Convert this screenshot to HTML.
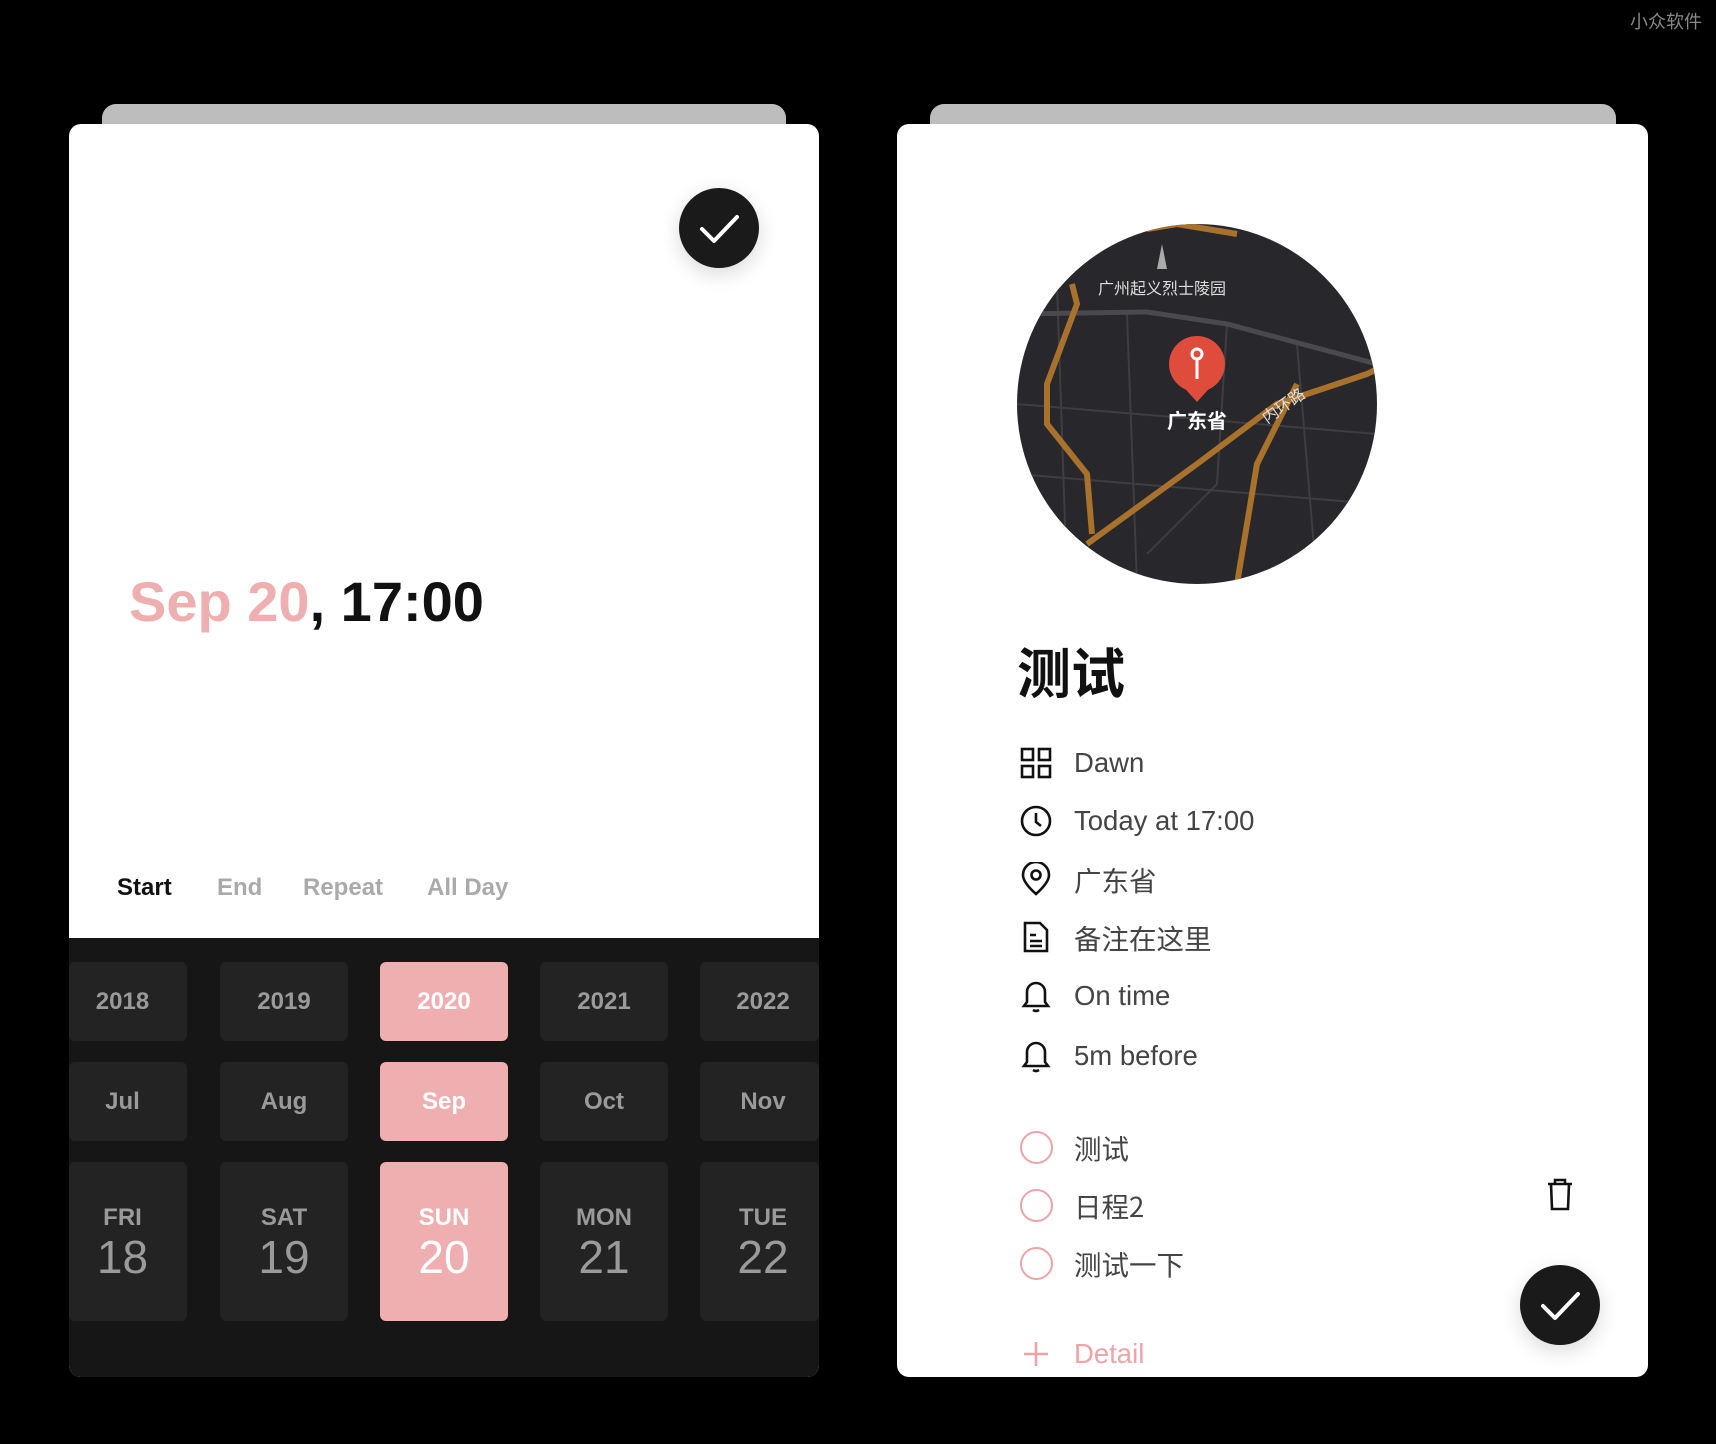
<!DOCTYPE html>
<html><head><meta charset="utf-8"><style>
*{margin:0;padding:0;box-sizing:border-box}
body{width:1716px;height:1444px;background:#000;position:relative;overflow:hidden;font-family:"Liberation Sans","Noto Sans CJK SC",sans-serif}
.a{position:absolute}
.tab{background:#bdbdbd;border-radius:14px 14px 0 0;height:40px}
.card{background:#fff;border-radius:12px}
.cell{position:absolute;background:#232323;border-radius:6px;color:#9a9a9a;font-weight:bold;font-size:24px;display:flex;align-items:center;justify-content:center;flex-direction:column}
.pk{background:#efafb1;color:#fff}
.big{font-size:46px;font-weight:normal;line-height:46px;margin-top:2px}
.it{position:absolute;left:1074px;font-size:27.5px;color:#444;line-height:34px}
.ic{position:absolute;left:1019px;width:34px;height:34px}
.ck{position:absolute;left:1020px;width:33px;height:33px;border:2.5px solid #eea3a6;border-radius:50%}
.l{padding-right:11px}.r{padding-left:7px}
</style></head><body>
<div class="a" style="right:14px;top:8px;color:#888;font-size:18px">小众软件</div>

<div class="a tab" style="left:102px;top:104px;width:684px"></div>
<div class="a card" style="left:69px;top:124px;width:750px;height:1253px;overflow:hidden">
 <div class="a" style="left:0;top:814px;width:750px;height:439px;background:#161616"></div>
</div>
<div class="a" style="left:679px;top:188px;width:80px;height:80px;border-radius:50%;background:#1a1a1a;box-shadow:0 6px 20px rgba(0,0,0,.15)">
 <svg width="80" height="80"><path d="M23 41 L35 53 L58 29" stroke="#fff" stroke-width="4" fill="none" stroke-linecap="round" stroke-linejoin="round"/></svg></div>
<div class="a" style="left:129px;top:569px;font-size:56px;font-weight:bold;color:#111;white-space:nowrap"><span style="color:#efafb1">Sep 20</span>, 17:00</div>
<div class="a" style="left:117px;top:874px;font-size:24px;font-weight:bold;color:#111">Start</div>
<div class="a" style="left:217px;top:874px;font-size:24px;font-weight:bold;color:#aaa">End</div>
<div class="a" style="left:303px;top:874px;font-size:24px;font-weight:bold;color:#aaa">Repeat</div>
<div class="a" style="left:427px;top:874px;font-size:24px;font-weight:bold;color:#aaa">All Day</div>

<div class="cell l" style="left:69px;top:962px;width:118px;height:79px">2018</div>
<div class="cell" style="left:220px;top:962px;width:128px;height:79px">2019</div>
<div class="cell pk" style="left:380px;top:962px;width:128px;height:79px">2020</div>
<div class="cell" style="left:540px;top:962px;width:128px;height:79px">2021</div>
<div class="cell r" style="left:700px;top:962px;width:119px;height:79px">2022</div>
<div class="cell l" style="left:69px;top:1062px;width:118px;height:79px">Jul</div>
<div class="cell" style="left:220px;top:1062px;width:128px;height:79px">Aug</div>
<div class="cell pk" style="left:380px;top:1062px;width:128px;height:79px">Sep</div>
<div class="cell" style="left:540px;top:1062px;width:128px;height:79px">Oct</div>
<div class="cell r" style="left:700px;top:1062px;width:119px;height:79px">Nov</div>
<div class="cell l" style="left:69px;top:1162px;width:118px;height:159px">FRI<div class="big">18</div></div>
<div class="cell" style="left:220px;top:1162px;width:128px;height:159px">SAT<div class="big">19</div></div>
<div class="cell pk" style="left:380px;top:1162px;width:128px;height:159px">SUN<div class="big">20</div></div>
<div class="cell" style="left:540px;top:1162px;width:128px;height:159px">MON<div class="big">21</div></div>
<div class="cell r" style="left:700px;top:1162px;width:119px;height:159px">TUE<div class="big">22</div></div>

<div class="a tab" style="left:930px;top:104px;width:686px"></div>
<div class="a card" style="left:897px;top:124px;width:751px;height:1253px"></div>

<svg class="a" style="left:1017px;top:224px" width="360" height="360" viewBox="0 0 360 360">
<defs><clipPath id="c"><circle cx="180" cy="180" r="180"/></clipPath></defs>
<g clip-path="url(#c)">
<rect width="360" height="360" fill="#28272b"/>
<g stroke="#3e3d42" stroke-width="2" fill="none">
<path d="M0 90 L130 88 L210 100 L360 140"/><path d="M0 180 L360 210"/><path d="M0 250 L360 280"/><path d="M110 90 L120 360"/><path d="M210 100 L200 260 L130 330"/><path d="M280 120 L300 360"/><path d="M40 60 L50 360"/>
</g>
<path d="M0 90 L130 88 L210 100 L360 140" stroke="#4a494e" stroke-width="5" fill="none"/>
<g stroke="#a8712c" stroke-width="6" fill="none">
<path d="M55 60 L60 80 L30 160 L30 200 L70 250 L75 310"/>
<path d="M70 320 L180 240 L260 180 L350 150 L370 140"/>
<path d="M280 160 L240 240 L220 360"/>
<path d="M130 5 L160 0 L220 10"/>
</g>
<text x="145" y="70" fill="#ddd" font-size="16" text-anchor="middle" font-family="Noto Sans CJK SC,sans-serif">广州起义烈士陵园</text>
<path d="M145 20 L150 45 L140 45 Z" fill="#aaa"/>
<circle cx="180" cy="140" r="28" fill="#e04c3c"/><path d="M162 158 L180 178 L198 158Z" fill="#e04c3c"/>
<circle cx="180" cy="130" r="5" fill="none" stroke="#fff" stroke-width="3"/><path d="M180 135 L180 155" stroke="#fff" stroke-width="3"/>
<text x="180" y="204" fill="#fff" font-size="20" font-weight="bold" text-anchor="middle" font-family="Noto Sans CJK SC,sans-serif">广东省</text>
<text x="250" y="200" fill="#ddd" font-size="16" transform="rotate(-35 250 200)" font-family="Noto Sans CJK SC,sans-serif">内环路</text>
</g></svg>

<div class="a" style="left:1017px;top:630px;font-size:54px;font-weight:bold;color:#111;font-family:'Noto Sans CJK SC',sans-serif">测试</div>

<svg class="ic" style="top:746px" viewBox="0 0 34 34" fill="none" stroke="#111" stroke-width="2.6"><rect x="3" y="3" width="11" height="11"/><rect x="20" y="3" width="11" height="11"/><rect x="3" y="20" width="11" height="11"/><rect x="20" y="20" width="11" height="11"/></svg>
<div class="it" style="top:746px">Dawn</div>
<svg class="ic" style="top:804px" viewBox="0 0 34 34" fill="none" stroke="#111" stroke-width="2.6"><circle cx="17" cy="17" r="14"/><path d="M17 9 V18 L22 22"/></svg>
<div class="it" style="top:804px">Today at 17:00</div>
<svg class="ic" style="top:862px" viewBox="0 0 34 34" fill="none" stroke="#111" stroke-width="2.6"><path d="M17 32 C8 24 4 18 4 13 A13 13 0 0 1 30 13 C30 18 26 24 17 32Z"/><circle cx="17" cy="13" r="4.5"/></svg>
<div class="it" style="top:862px;font-family:'Noto Sans CJK SC',sans-serif">广东省</div>
<svg class="ic" style="top:920px" viewBox="0 0 34 34" fill="none" stroke="#111" stroke-width="2.6"><path d="M6 3 H21 L28 10 V31 H6 Z"/><path d="M11 15 H17 M11 21 H23 M11 26 H23"/></svg>
<div class="it" style="top:920px;font-family:'Noto Sans CJK SC',sans-serif">备注在这里</div>
<svg class="ic" style="top:979px" viewBox="0 0 34 34" fill="none" stroke="#111" stroke-width="2.6"><path d="M5 27 H29 L26 23 V13 A9 9 0 0 0 8 13 V23 Z"/><path d="M14 31 Q17 33 20 31"/></svg>
<div class="it" style="top:979px">On time</div>
<svg class="ic" style="top:1039px" viewBox="0 0 34 34" fill="none" stroke="#111" stroke-width="2.6"><path d="M5 27 H29 L26 23 V13 A9 9 0 0 0 8 13 V23 Z"/><path d="M14 31 Q17 33 20 31"/></svg>
<div class="it" style="top:1039px">5m before</div>

<div class="ck" style="top:1131px"></div><div class="it" style="top:1130px;font-family:'Noto Sans CJK SC',sans-serif">测试</div>
<div class="ck" style="top:1189px"></div><div class="it" style="top:1188px;font-family:'Noto Sans CJK SC',sans-serif">日程2</div>
<div class="ck" style="top:1247px"></div><div class="it" style="top:1246px;font-family:'Noto Sans CJK SC',sans-serif">测试一下</div>

<svg class="a" style="left:1543px;top:1176px" width="34" height="36" viewBox="0 0 34 36" fill="none" stroke="#111" stroke-width="2.6"><path d="M5 8 H29 M12 8 V4 H22 V8 M8 8 L9 33 H25 L26 8"/></svg>
<div class="a" style="left:1520px;top:1265px;width:80px;height:80px;border-radius:50%;background:#1a1a1a;box-shadow:0 6px 20px rgba(0,0,0,.15)">
 <svg width="80" height="80"><path d="M23 41 L35 53 L58 29" stroke="#fff" stroke-width="4" fill="none" stroke-linecap="round" stroke-linejoin="round"/></svg></div>

<svg class="a" style="left:1022px;top:1340px" width="28" height="28"><path d="M14 2 V26 M2 14 H26" stroke="#eea3a6" stroke-width="2.6"/></svg>
<div class="it" style="top:1337px;color:#eea3a6">Detail</div>
</body></html>
